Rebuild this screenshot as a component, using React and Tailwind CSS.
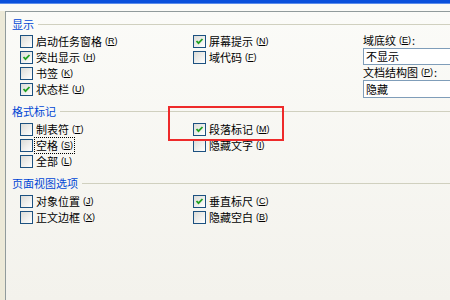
import React from 'react';

const font = { fontFamily: '"Noto Sans CJK SC", "Noto Sans", sans-serif' };

const Key = ({ k }) => (
  <span className="ml-[3px] text-[9px] leading-none" style={{ fontFamily: '"Liberation Sans", sans-serif' }}>
    (<span className="underline">{k}</span>)
  </span>
);

const Box = ({ checked }) => (
  <span className="relative w-[13px] h-[13px] shrink-0 border border-[#1C5180] bg-gradient-to-br from-[#DCDCD7] to-white">
    {checked && (
      <svg viewBox="0 0 11 11" className="absolute inset-0 w-[11px] h-[11px]">
        <path d="M2.5 5 L4.5 7.2 L8.5 3" fill="none" stroke="#21A121" strokeWidth="1.8" />
      </svg>
    )}
  </span>
);

const Check = ({ label, k, checked, focus }) => (
  <div className="h-[16px] flex items-center">
    <Box checked={checked} />
    <span className={`ml-[2px] flex items-center h-[15px] px-[1px] ${focus ? 'outline outline-1 outline-dotted outline-black' : ''}`}>
      <span className="text-[11px] leading-none">{label}</span>
      <Key k={k} />
    </span>
  </div>
);

const Header = ({ title, className = '' }) => (
  <div className={`h-[16px] flex items-center ${className}`}>
    <span className="text-[11px] leading-none text-[#0046D5]">{title}</span>
    <div className="flex-1 h-px bg-[#D0D0BF] ml-[4px]" />
  </div>
);

const Field = ({ value }) => (
  <div className="border border-[#7F9DB9] bg-white flex items-center pl-[2px] w-[100px] text-[11px] leading-none h-full">
    {value}
  </div>
);

export default function App() {
  return (
    <div className="w-[450px] h-[300px] overflow-hidden bg-[#ECE9D8] flex flex-col relative text-black" style={font}>
      <div className="h-[3px] bg-[#0A50DC]" />
      <div className="h-[1px] bg-[#5B8CEB]" />
      <div className="h-[7px] bg-[#FAFAF7]" />
      <div className="flex flex-1 min-h-0">
        <div className="w-[5px] shrink-0" />
        <div className="flex-1 min-w-0 border-l border-t border-[#919B9C] bg-gradient-to-b from-[#FBFBF8] to-[#F3F2EC] pl-[6px] pt-[4px]">
          <Header title="显示" />
          <div className="flex mt-[1px] ml-[8px]">
            <div className="w-[173px] shrink-0">
              <Check label="启动任务窗格" k="R" />
              <Check label="突出显示" k="H" checked />
              <Check label="书签" k="K" />
              <Check label="状态栏" k="U" checked />
            </div>
            <div className="w-[170px] shrink-0">
              <Check label="屏幕提示" k="N" checked />
              <Check label="域代码" k="F" />
            </div>
            <div className="flex-1 min-w-0 flex flex-col">
              <div className="h-[15px] flex items-center text-[11px] leading-none whitespace-nowrap">
                域底纹<Key k="E" /><span className="ml-[1px]">:</span>
              </div>
              <div className="h-[17px]"><Field value="不显示" /></div>
              <div className="h-[15px] flex items-center text-[11px] leading-none whitespace-nowrap">
                文档结构图<Key k="P" /><span className="ml-[1px]">:</span>
              </div>
              <div className="h-[18px]"><Field value="隐藏" /></div>
            </div>
          </div>
          <Header title="格式标记" className="mt-[5px]" />
          <div className="flex mt-[2px] ml-[8px]">
            <div className="w-[173px] shrink-0">
              <Check label="制表符" k="T" />
              <Check label="空格" k="S" focus />
              <Check label="全部" k="L" />
            </div>
            <div className="w-[170px] shrink-0">
              <Check label="段落标记" k="M" checked />
              <Check label="隐藏文字" k="I" />
            </div>
          </div>
          <Header title="页面视图选项" className="mt-[6px]" />
          <div className="flex mt-[2px] ml-[8px]">
            <div className="w-[173px] shrink-0">
              <Check label="对象位置" k="J" />
              <Check label="正文边框" k="X" />
            </div>
            <div className="w-[170px] shrink-0">
              <Check label="垂直标尺" k="C" checked />
              <Check label="隐藏空白" k="B" />
            </div>
          </div>
        </div>
      </div>
      <div className="absolute left-[168px] top-[106px] w-[116px] h-[35px] border-2 border-[#EE2A2A]" />
    </div>
  );
}
